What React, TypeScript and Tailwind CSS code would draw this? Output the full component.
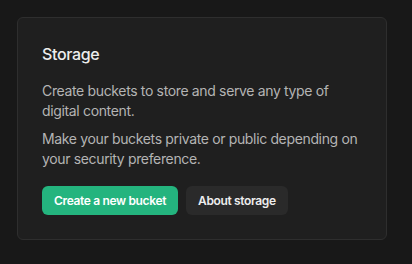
export default function App() {
  return (
    <main
      className="min-h-screen bg-[#181818] p-[17px] tracking-[-0.35px]"
      style={{ fontFamily: "Inter, 'Noto Sans', sans-serif" }}
    >
      <div className="w-[370px] rounded-md border border-[#2e2e2e] bg-[#1f1f1f] p-6">
        <h3 className="mb-[15px] text-base font-medium leading-6 text-[#ededed]">
          Storage
        </h3>
        <p className="text-sm leading-5 text-[#b4b4b4]">
          Create buckets to store and serve any type of digital content.
        </p>
        <p className="mt-2 text-sm leading-5 text-[#b4b4b4]">
          Make your buckets private or public depending on your security
          preference.
        </p>
        <div className="mt-[17px] flex gap-2">
          <button className="h-[29px] rounded-md bg-[#24b47e] px-3 text-xs font-semibold text-white">
            Create a new bucket
          </button>
          <button className="h-[29px] rounded-md bg-[#2a2a2a] px-3 text-xs font-semibold text-[#ededed]">
            About storage
          </button>
        </div>
      </div>
    </main>
  );
}
